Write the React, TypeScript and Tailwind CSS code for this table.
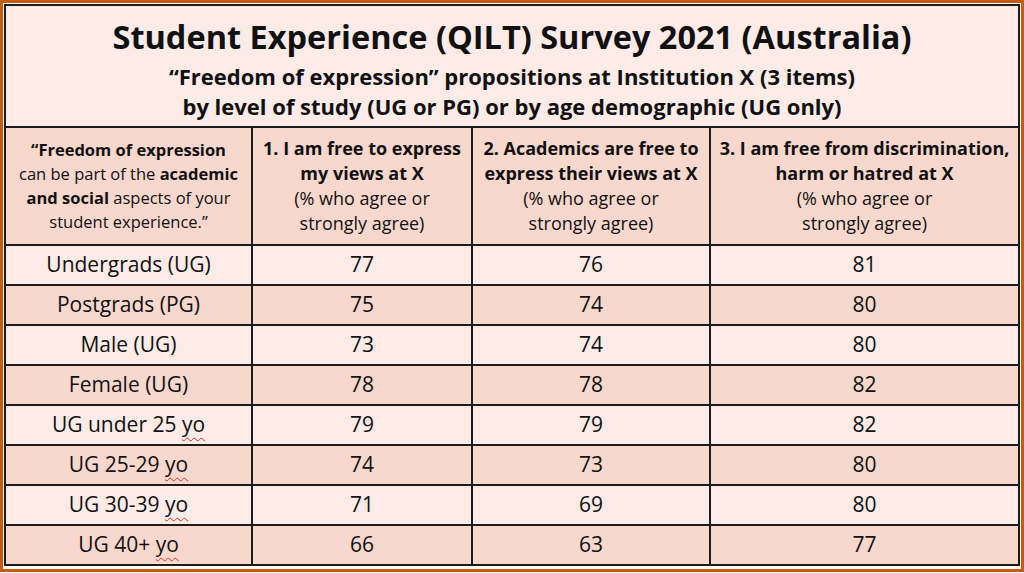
import React from "react";

const rows: [string, number, number, number, boolean][] = [
  ["Undergrads (UG)", 77, 76, 81, false],
  ["Postgrads (PG)", 75, 74, 80, false],
  ["Male (UG)", 73, 74, 80, false],
  ["Female (UG)", 78, 78, 82, false],
  ["UG under 25 ", 79, 79, 82, true],
  ["UG 25-29 ", 74, 73, 80, true],
  ["UG 30-39 ", 71, 69, 80, true],
  ["UG 40+ ", 66, 63, 77, true],
];

export default function App() {
  return (
    <div
      className="w-[1024px] h-[573px] bg-white text-[#111]"
      style={{ fontFamily: "'Open Sans', sans-serif" }}
    >
      <div className="w-[1024px] h-[572px] border-[3px] border-[#c55a11] p-[1px]">
        <table className="w-[1014px] border-collapse border-2 border-[#1c1c1c] table-fixed">
          <colgroup>
            <col className="w-[247px]" />
            <col className="w-[220px]" />
            <col className="w-[238px]" />
            <col className="w-[309px]" />
          </colgroup>
          <tbody>
            <tr className="h-[122px] bg-[#fcebe7]">
              <td colSpan={4} className="border-2 border-[#1c1c1c] text-center align-top pt-[7px]">
                <div className="text-[32.5px] font-bold leading-[48px]">
                  Student Experience (QILT) Survey 2021 (Australia)
                </div>
                <div className="text-[22px] font-bold leading-[30px]">
                  “Freedom of expression” propositions at Institution X (3 items)
                </div>
                <div className="text-[22px] font-bold leading-[30px]">
                  by level of study (UG or PG) or by age demographic (UG only)
                </div>
              </td>
            </tr>
            <tr className="h-[118px] bg-[#f8d7cd]">
              <td className="border-2 border-[#1c1c1c] text-center text-[16.5px] leading-[24px] px-0">
                <b>“Freedom of expression</b>
                <br />
                can be part of the <b>academic</b>
                <br />
                <b>and social</b> aspects of your
                <br />
                student experience.”
              </td>
              <td className="border-2 border-[#1c1c1c] text-center text-[18px] leading-[25px]">
                <b>1. I am free to express</b>
                <br />
                <b>my views at X</b>
                <br />
                (% who agree or
                <br />
                strongly agree)
              </td>
              <td className="border-2 border-[#1c1c1c] text-center text-[18px] leading-[25px]">
                <b>2. Academics are free to</b>
                <br />
                <b>express their views at X</b>
                <br />
                (% who agree or
                <br />
                strongly agree)
              </td>
              <td className="border-2 border-[#1c1c1c] text-center text-[18px] leading-[25px]">
                <b>3. I am free from discrimination,</b>
                <br />
                <b>harm or hatred at X</b>
                <br />
                (% who agree or
                <br />
                strongly agree)
              </td>
            </tr>
            {rows.map(([label, a, b, c, yo], i) => (
              <tr
                key={label}
                className={
                  "h-[40px] text-[21px] " + (i % 2 === 0 ? "bg-[#fcebe7]" : "bg-[#f8d7cd]")
                }
              >
                <td className="border-2 border-[#1c1c1c] text-center">
                  {label}
                  {yo && (
                    <span className="underline decoration-wavy decoration-[#e03030] decoration-1 underline-offset-[5px]">
                      yo
                    </span>
                  )}
                </td>
                <td className="border-2 border-[#1c1c1c] text-center">{a}</td>
                <td className="border-2 border-[#1c1c1c] text-center">{b}</td>
                <td className="border-2 border-[#1c1c1c] text-center">{c}</td>
              </tr>
            ))}
          </tbody>
        </table>
      </div>
    </div>
  );
}
